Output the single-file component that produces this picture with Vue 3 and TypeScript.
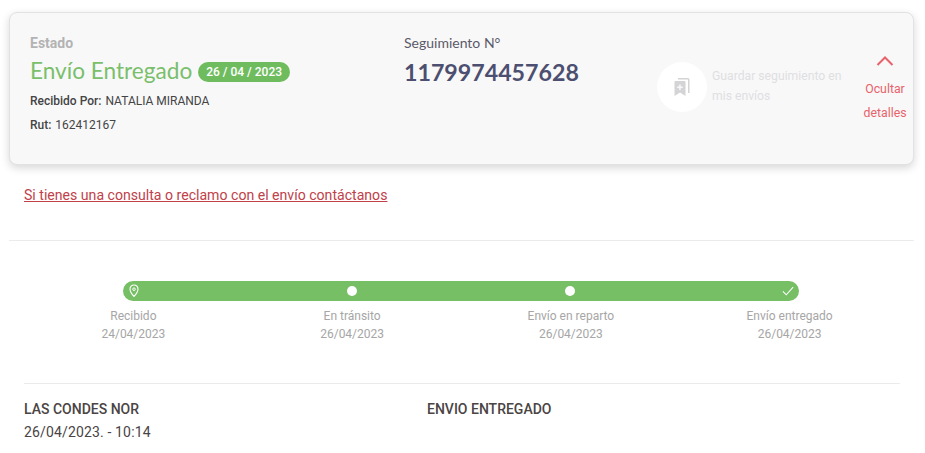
<template>
    <div class="page">
        <div class="card">
            <div class="status">
                <span class="status-label">Estado</span>
                <div class="status-main">
                    <span class="status-title">Envío Entregado</span>
                    <span class="status-date">26 / 04 / 2023</span>
                </div>
                <div class="status-line"><b>Recibido Por:</b> NATALIA MIRANDA</div>
                <div class="status-line"><b>Rut:</b> 162412167</div>
            </div>
            <div class="tracking">
                <span class="tracking-label">Seguimiento N°</span>
                <span class="tracking-number">1179974457628</span>
            </div>
            <div class="save">
                <div class="save-icon">
                    <svg width="18" height="20" viewBox="0 0 18 20">
                        <path d="M5 1h10a1.500 1.500 0 0 1 1.500 1.500V16h-1.500V2.500H5z" fill="#d4d4d6" />
                        <path d="M2.500 4H11.500a1 1 0 0 1 1 1V19L7 15.500 1.500 19V5a1 1 0 0 1 1-1z" fill="#d4d4d6" />
                        <path d="M6.200 7.500h1.500v2h2V11h-2v2H6.200v-2h-2V9.500h2z" fill="#f8f8f9" />
                    </svg>
                </div>
                <span class="save-text">Guardar seguimiento en mis envíos</span>
            </div>
            <div class="toggle">
                <svg width="18" height="10" viewBox="0 0 18 10">
                    <path d="M1.500 9L9 1.500 16.500 9" fill="none" stroke="#e8626a" stroke-width="2" />
                </svg>
                <span class="toggle-text">Ocultar detalles</span>
            </div>
        </div>

        <a class="contact" href="#">Si tienes una consulta o reclamo con el envío contáctanos</a>
        <div class="divider"></div>

        <div class="tracker">
            <div class="bar">
                <svg class="bar-icon" width="12" height="14" viewBox="0 0 12 14">
                    <path d="M6 1a4 4 0 0 1 4 4.200C10 8 7.500 10.800 6 12.500 4.500 10.800 2 8 2 5.200A4 4 0 0 1 6 1z" fill="none" stroke="#fff" stroke-width="1.100" />
                    <circle cx="6" cy="5.200" r="1.300" fill="none" stroke="#fff" stroke-width="1" />
                </svg>
                <span class="bar-dot"></span>
                <span class="bar-dot"></span>
                <svg class="bar-icon" width="14" height="12" viewBox="0 0 14 12">
                    <path d="M1 6.500L5 10.500 13 1.500" fill="none" stroke="#fff" stroke-width="1.200" />
                </svg>
            </div>
            <div class="steps">
                <div v-for="step in steps" :key="step.name" class="step">
                    <span>{{ step.name }}</span>
                    <span>{{ step.date }}</span>
                </div>
            </div>
        </div>

        <div class="history">
            <div class="history-place">
                <strong>LAS CONDES NOR</strong>
                <span class="history-date">26/04/2023. - 10:14</span>
            </div>
            <strong class="history-state">ENVIO ENTREGADO</strong>
        </div>
    </div>
</template>

<script setup lang="ts">
    interface Istep {
        name: string;
        date: string;
    }

    const steps: Array<Istep> = [
        { name: 'Recibido', date: '24/04/2023' },
        { name: 'En tránsito', date: '26/04/2023' },
        { name: 'Envío en reparto', date: '26/04/2023' },
        { name: 'Envío entregado', date: '26/04/2023' },
    ]
</script>

<style>
    html, body {
        background-color: #ffffff;
    }
</style>

<style scoped>
    .page {
        width: 925px;
        height: 453px;
        overflow: hidden;
        box-sizing: border-box;
        padding-top: 12px;
        font-family: Roboto, "Liberation Sans", sans-serif;
    }
    .card {
        width: 905px;
        height: 153px;
        margin-left: 9px;
        box-sizing: border-box;
        border: 1px solid #e2e2e2;
        border-radius: 8px;
        background-color: #f8f8f9;
        box-shadow: 0 3px 8px rgba(0, 0, 0, 0.16);
        display: flex;
        flex-direction: row;
    }
    .status {
        width: 374px;
        margin-left: 20px;
        padding-top: 22px;
        box-sizing: border-box;
        display: flex;
        flex-direction: column;
    }
    .status-label {
        font-size: 14px;
        line-height: 16px;
        font-weight: 700;
        color: #b3b3b3;
    }
    .status-main {
        display: flex;
        flex-direction: row;
        align-items: center;
        height: 32px;
        margin-top: 3px;
        margin-bottom: 3px;
    }
    .status-title {
        font-family: Lato, sans-serif;
        font-size: 22.600px;
        color: #7abf6b;
    }
    .status-date {
        margin-left: 6px;
        margin-top: 3px;
        height: 20px;
        line-height: 20px;
        padding: 0 8px;
        border-radius: 10px;
        background-color: #6fbc5f;
        color: #ffffff;
        font-size: 12px;
        font-weight: 500;
    }
    .status-line {
        font-size: 12px;
        line-height: 24px;
        color: #444444;
    }
    .status-line b {
        font-weight: 500;
        margin-right: 1px;
    }
    .tracking {
        width: 253px;
        padding-top: 21px;
        box-sizing: border-box;
        display: flex;
        flex-direction: column;
    }
    .tracking-label {
        font-family: Lato, sans-serif;
        font-size: 14px;
        line-height: 18px;
        color: #5a5a68;
    }
    .tracking-number {
        font-family: Lato, sans-serif;
        font-size: 23.200px;
        line-height: 32px;
        margin-top: 4px;
        font-weight: 700;
        color: #4c4f70;
    }
    .save {
        width: 200px;
        padding-top: 49px;
        box-sizing: border-box;
        display: flex;
        flex-direction: row;
        align-items: flex-start;
    }
    .save-icon {
        width: 50px;
        height: 50px;
        flex-shrink: 0;
        border-radius: 50%;
        background-color: #ffffff;
        display: flex;
        align-items: center;
        justify-content: center;
    }
    .save-text {
        width: 135px;
        margin-left: 5px;
        margin-top: 4px;
        font-size: 12.200px;
        line-height: 20px;
        color: #dfdfe1;
    }
    .toggle {
        width: 56px;
        padding-top: 43px;
        box-sizing: border-box;
        display: flex;
        flex-direction: column;
        align-items: center;
        text-align: center;
    }
    .toggle-text {
        margin-top: 11px;
        font-size: 12.300px;
        line-height: 24px;
        color: #e8626a;
    }
    .contact {
        display: block;
        width: fit-content;
        margin: 22px 0 0 24px;
        font-size: 14.100px;
        line-height: 17px;
        color: #c0414a;
    }
    .divider {
        width: 905px;
        height: 1px;
        margin: 36px 0 0 9px;
        background-color: #ebebeb;
    }
    .tracker {
        width: 875px;
        margin: 40px 0 0 24px;
    }
    .bar {
        height: 20px;
        margin: 0 100px 0 99px;
        padding: 0 5px;
        border-radius: 10px;
        background-color: #76bf64;
        display: flex;
        flex-direction: row;
        align-items: center;
        justify-content: space-between;
    }
    .bar-icon {
        width: 12px;
        flex-shrink: 0;
    }
    .bar-dot {
        width: 10px;
        height: 10px;
        margin: 0 1px;
        border-radius: 50%;
        background-color: #ffffff;
    }
    .steps {
        display: grid;
        grid-template-columns: repeat(4, 1fr);
        margin-top: 6px;
    }
    .step {
        display: flex;
        flex-direction: column;
        align-items: center;
        font-size: 12px;
        line-height: 18px;
        color: #a6a6a6;
    }
    .history {
        width: 876px;
        margin: 40px 0 0 24px;
        padding-top: 15px;
        border-top: 1px solid #ebebeb;
        display: flex;
        flex-direction: row;
        color: #4a4444;
        font-size: 14px;
    }
    .history strong {
        font-weight: 500;
        line-height: 20px;
    }
    .history-place {
        width: 403px;
        display: flex;
        flex-direction: column;
    }
    .history-date {
        margin-top: 1px;
        line-height: 24px;
        letter-spacing: 0.15px;
    }
</style>
